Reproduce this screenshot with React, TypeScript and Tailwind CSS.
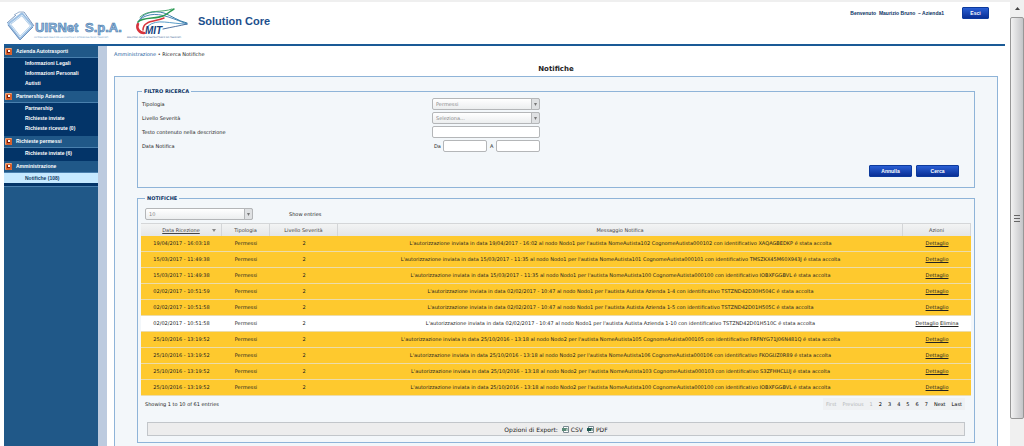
import React from "react";

interface MenuGroup {
  title: string;
  items: string[];
}

interface Notifica {
  data: string;
  messaggio: string;
  letta?: boolean;
}

const menu: MenuGroup[] = [
  {
    title: "Azienda Autotrasporti",
    items: ["Informazioni Legali", "Informazioni Personali", "Autisti"],
  },
  {
    title: "Partnership Aziende",
    items: ["Partnership", "Richieste inviate", "Richieste ricevute (0)"],
  },
  { title: "Richieste permessi", items: ["Richieste inviate (6)"] },
  { title: "Amministrazione", items: ["Notifiche (108)"] },
];

const notifiche: Notifica[] = [
  {
    data: "19/04/2017 - 16:03:18",
    messaggio:
      "L'autorizzazione inviata in data 19/04/2017 - 16:02 al nodo Nodo1 per l'autista NomeAutista102 CognomeAutista000102 con identificativo XAQAGBEDKP é stata accolta",
  },
  {
    data: "15/03/2017 - 11:49:38",
    messaggio:
      "L'autorizzazione inviata in data 15/03/2017 - 11:35 al nodo Nodo1 per l'autista NomeAutista101 CognomeAutista000101 con identificativo TMSZKX45M60X943J é stata accolta",
  },
  {
    data: "15/03/2017 - 11:49:38",
    messaggio:
      "L'autorizzazione inviata in data 15/03/2017 - 11:35 al nodo Nodo1 per l'autista NomeAutista100 CognomeAutista000100 con identificativo IOBXFGGBVL é stata accolta",
  },
  {
    data: "02/02/2017 - 10:51:59",
    messaggio:
      "L'autorizzazione inviata in data 02/02/2017 - 10:47 al nodo Nodo1 per l'autista Autista Azienda 1-4 con identificativo TSTZND42D30H504C é stata accolta",
  },
  {
    data: "02/02/2017 - 10:51:58",
    messaggio:
      "L'autorizzazione inviata in data 02/02/2017 - 10:47 al nodo Nodo1 per l'autista Autista Azienda 1-5 con identificativo TSTZND42D01H505C é stata accolta",
  },
  {
    data: "02/02/2017 - 10:51:58",
    messaggio:
      "L'autorizzazione inviata in data 02/02/2017 - 10:47 al nodo Nodo1 per l'autista Autista Azienda 1-10 con identificativo TSTZND42D01H510C é stata accolta",
    letta: true,
  },
  {
    data: "25/10/2016 - 13:19:52",
    messaggio:
      "L'autorizzazione inviata in data 25/10/2016 - 13:18 al nodo Nodo2 per l'autista NomeAutista105 CognomeAutista000105 con identificativo FRFNYG71J06N481Q é stata accolta",
  },
  {
    data: "25/10/2016 - 13:19:52",
    messaggio:
      "L'autorizzazione inviata in data 25/10/2016 - 13:18 al nodo Nodo2 per l'autista NomeAutista106 CognomeAutista000106 con identificativo FKOGUZ0R89 é stata accolta",
  },
  {
    data: "25/10/2016 - 13:19:52",
    messaggio:
      "L'autorizzazione inviata in data 25/10/2016 - 13:18 al nodo Nodo2 per l'autista NomeAutista103 CognomeAutista000103 con identificativo S3ZFHHCLUJ é stata accolta",
  },
  {
    data: "25/10/2016 - 13:19:52",
    messaggio:
      "L'autorizzazione inviata in data 25/10/2016 - 13:18 al nodo Nodo2 per l'autista NomeAutista100 CognomeAutista000100 con identificativo IOBXFGGBVL é stata accolta",
  },
];

const UirnetLogo: React.FC = () => (
  <svg width="120" height="34" viewBox="0 0 120 34" role="img" aria-label="UIRNet S.p.A.">
    <g fill="none" strokeLinejoin="round">
      <path d="M3 14 16 4 26 16 14 28Z" stroke="#9cc0e4" strokeWidth="3" />
      <path d="M4 14 16 5 25 16 14 27Z" stroke="#dbe9f6" strokeWidth="1" />
      <path d="M1 13 10 5M2 15 14 30M18 2 28 16M27 17 14 30" stroke="#5a7fae" strokeWidth="0.8" />
      <path d="M8 5 13 2H18" stroke="#5a7fae" strokeWidth="0.6" />
    </g>
    <g
      fontFamily="'Liberation Sans', sans-serif"
      fontWeight="bold"
      fontSize="13"
      fill="#93bbe2"
      stroke="#4a78a8"
      strokeWidth="0.6"
    >
      <text x="29" y="22">
        UIRNet
      </text>
      <text x="79" y="22">
        S.p.A.
      </text>
    </g>
    <text x="28" y="28" fontFamily="'DejaVu Sans', sans-serif" fontSize="2" fill="#5f93c4">
      SISTEMA NAZIONALE PER LA LOGISTICA E INTERMODALITÀ DEI TRASPORTI
    </text>
  </svg>
);

const MitLogo: React.FC = () => (
  <svg width="64" height="32" viewBox="0 0 64 32" role="img" aria-label="MIT">
    <g fill="none" strokeLinecap="round">
      <path d="M18 25C8 22 9 12 20 8C31 4 41 8 61 16" stroke="#4a86b8" strokeWidth="1" />
      <path d="M13 13C16 5 28 2 38 5C46 8 52 13 61 15" stroke="#3a7fa8" strokeWidth="1" />
      <path d="M12 14C16 9 30 11 37 8C42 6 44 3 48 1" stroke="#2c9a52" strokeWidth="1.500" />
      <path d="M14 9C22 1 36 5 46 1" stroke="#4aa870" strokeWidth="1" />
      <path d="M12 16C10 20 13 25 18 25" stroke="#d8343c" strokeWidth="2.500" />
      <path d="M17 22C17 12 30 14 38 10" stroke="#d8343c" strokeWidth="1.500" />
      <path d="M22 18C31 10 44 16 61 16" stroke="#5a9cc8" strokeWidth="1" />
      <path d="M37 21C46 19 53 18 61 16" stroke="#24508a" strokeWidth="0.8" />
    </g>
    <text
      x="19"
      y="26"
      fontFamily="'Liberation Sans', sans-serif"
      fontStyle="italic"
      fontWeight="bold"
      fontSize="10"
      fill="#163f7c"
    >
      MIT
    </text>
    <text x="1" y="30" fontFamily="'DejaVu Sans', sans-serif" fontSize="2" fill="#24508a">
      MINISTERO DELLE INFRASTRUTTURE E DEI TRASPORTI
    </text>
  </svg>
);

const MenuIcon: React.FC = () => (
  <svg width="7" height="7" viewBox="0 0 7 7" aria-hidden="true">
    <rect width="7" height="7" rx="1" fill="#f0a67c" />
    <rect x="1" y="1" width="6" height="6" rx="1" fill="#d8602c" />
    <path d="M2 2H5V5H2Z" fill="#7a1c08" />
    <path d="M3 2H5V4H3Z" fill="#fff" />
  </svg>
);

const ExportIcon: React.FC<{ color: string }> = ({ color }) => (
  <svg width="7" height="7" viewBox="0 0 7 7" aria-hidden="true">
    <path d="M1.500 0.500H6.500V6.500H1.500Z" fill="#fff" stroke="#7a8a92" />
    <path d="M0 2H4V5H0Z" fill={color} />
    <path d="M1 5L5 2M5 2V5" stroke={color} />
  </svg>
);

const SelectBox: React.FC<{ id: string; value: string }> = ({ id, value }) => (
  <div className="relative h-3 w-[108px]">
    <select
      id={id}
      className="block h-3 w-full appearance-none rounded-[2px] border border-[#b4b6b8] bg-linear-to-b from-white to-[#eceeef] pl-[3px] text-[5px] leading-none text-[#888]"
    >
      <option>{value}</option>
    </select>
    <span className="pointer-events-none absolute inset-y-0 right-0 flex w-[9px] items-center justify-center rounded-r-[2px] border border-[#b4b6b8] bg-[#dfe1e3]">
      <svg width="3" height="3" viewBox="0 0 3 3" aria-hidden="true">
        <path d="M0 0H3L1.500 3Z" fill="#777" />
      </svg>
    </span>
  </div>
);

const buttonClass =
  "rounded-[1px] border border-[#0c3a9c] bg-linear-to-b from-[#2a5fd4] to-[#0a2f96] font-[Liberation_Sans,sans-serif] text-[5px] font-bold text-white";
const fieldClass = "h-3 rounded-[2px] border border-[#b4b6b8] bg-white px-1 text-[5px]";
const fieldsetClass = "min-w-0 border border-[#8fb4d8] bg-[#f3f7fa]";
const legendClass = "ml-1 px-[2px] text-[5px] leading-[6px] font-bold text-[#0b3364]";

const Header: React.FC = () => (
  <header className="mr-[5px] ml-1 flex h-11 items-start border-b-2 border-[#1a5a96]">
    <div className="pt-2 pl-[2px]">
      <UirnetLogo />
    </div>
    <div className="pt-[6px]">
      <MitLogo />
    </div>
    <h1 className="pt-3 pl-2 font-[Liberation_Sans,sans-serif] text-[11px] leading-[14px] font-bold text-[#1c4f8c]">
      Solution Core
    </h1>
    <div className="ml-auto flex items-center gap-[18px] pt-[5px] pr-4">
      <span className="font-[Liberation_Sans,sans-serif] text-[5px] font-bold whitespace-pre text-[#0b3364]">
        Benvenuto  Maurizio Bruno  – Azienda1
      </span>
      <button className={`${buttonClass} h-3 w-[27px]`}>Esci</button>
    </div>
  </header>
);

const Sidebar: React.FC = () => (
  <aside className="w-[103px] shrink-0 border-r-[9px] border-[#bdcbdf] bg-[#205888] font-[Liberation_Sans,sans-serif] text-[5px] font-bold text-white">
    <nav className="border-b border-[#4a80ae]">
      {menu.map((group) => (
        <div key={group.title} className="bg-[#033468]">
          <div className="flex h-3 items-center gap-1 border-b border-[#4a80ae] bg-[#205888] pl-[1px]">
            <MenuIcon />
            {group.title}
          </div>
          <ul className="pb-[3px]">
            {group.items.map((item) => (
              <li key={item}>
                <a
                  href="#"
                  className={
                    item.startsWith("Notifiche")
                      ? "block bg-[#c6e9ff] pl-[21px] leading-[10px] text-[#12395f]"
                      : "block pl-[21px] leading-[10px]"
                  }
                >
                  {item}
                </a>
              </li>
            ))}
          </ul>
        </div>
      ))}
    </nav>
  </aside>
);

const Filtro: React.FC = () => (
  <fieldset className={`${fieldsetClass} pb-[10px]`}>
    <legend className={legendClass}>FILTRO RICERCA</legend>
    <div className="grid grid-cols-[290px_1fr] items-center gap-y-[2px] pt-1 pl-1">
      <label htmlFor="tipologia">Tipologia</label>
      <SelectBox id="tipologia" value="Permessi" />
      <label htmlFor="severita">Livello Severità</label>
      <SelectBox id="severita" value="Seleziona..." />
      <label htmlFor="testo">Testo contenuto nella descrizione</label>
      <input id="testo" className={`${fieldClass} w-[108px]`} />
      <span>Data Notifica</span>
      <div className="flex items-center gap-[2px] pl-[2px]">
        <label htmlFor="da">Da</label>
        <input id="da" className={`${fieldClass} w-11`} />
        <label htmlFor="a" className="px-px">
          A
        </label>
        <input id="a" className={`${fieldClass} w-11`} />
      </div>
    </div>
    <div className="mt-[13px] flex justify-end gap-1 pr-[15px]">
      <button className={`${buttonClass} h-3 w-[43px]`}>Annulla</button>
      <button className={`${buttonClass} h-3 w-[43px]`}>Cerca</button>
    </div>
  </fieldset>
);

const Tabella: React.FC = () => (
  <table className="w-full table-fixed border-separate border-spacing-0 text-center">
    <thead className="bg-linear-to-b from-[#f4f5f5] to-[#e4e6e8]">
      <tr className="h-[13px] text-[#444] [&>th]:border-t [&>th]:border-r [&>th]:border-[#d4d6d8] [&>th]:p-0 [&>th]:font-normal">
        <th className="w-[81px]">
          <span className="flex items-center justify-center gap-3 pl-4">
            <a href="#" className="underline">
              Data Ricezione
            </a>
            <svg width="4" height="3" viewBox="0 0 4 3" aria-hidden="true">
              <path d="M0 0H4L2 3Z" fill="#888" />
            </svg>
          </span>
        </th>
        <th className="w-12">Tipologia</th>
        <th className="w-[68px]">Livello Severità</th>
        <th>Messaggio Notifica</th>
        <th className="w-[68px]">Azioni</th>
      </tr>
    </thead>
    <tbody className="[&_td]:border-b [&_td]:border-[#ecdcaa] [&_td]:p-0">
      {notifiche.map((n, i) => (
        <tr key={i} className={n.letta ? "h-4 bg-white" : "h-4 bg-[#fec92e]"}>
          <td>{n.data}</td>
          <td>Permessi</td>
          <td>2</td>
          <td>{n.messaggio}</td>
          <td>
            <a href="#" className="underline">
              Dettaglio
            </a>
            {n.letta && (
              <>
                {" "}
                <a href="#" className="underline">
                  Elimina
                </a>
              </>
            )}
          </td>
        </tr>
      ))}
    </tbody>
  </table>
);

const Paginazione: React.FC = () => (
  <div className="flex items-center justify-between pt-[2px] pr-[6px] pl-1">
    <span>Showing 1 to 10 of 61 entries</span>
    <div className="flex h-3 items-center gap-[6px] bg-[#eff1f3] px-[3px]">
      {["First", "Previous", "1", "2", "3", "4", "5", "6", "7", "Next", "Last"].map(
        (p, i) => (
          <button key={p} disabled={i < 3} className="text-black disabled:text-[#b4b6b8]">
            {p}
          </button>
        )
      )}
    </div>
  </div>
);

const Elenco: React.FC = () => (
  <fieldset className={`${fieldsetClass} mt-[7px] px-[3px] pb-[6px]`}>
    <legend className={legendClass}>NOTIFICHE</legend>
    <div className="flex items-center gap-9 pt-[7px] pb-[3px] pl-1">
      <SelectBox id="entries" value="10" />
      <label htmlFor="entries">Show entries</label>
    </div>
    <Tabella />
    <Paginazione />
    <div className="mx-[6px] mt-3 flex h-[14px] items-center justify-center gap-1 border border-[#c2c6ca] bg-[#ededed] text-[6px]">
      <span>Opzioni di Export:</span>
      <a href="#" className="flex items-center gap-[2px]">
        <ExportIcon color="#5c8a78" />
        CSV
      </a>
      <a href="#" className="flex items-center gap-[2px]">
        <ExportIcon color="#1f5a50" />
        PDF
      </a>
    </div>
  </fieldset>
);

const Scrollbar: React.FC = () => (
  <div className="flex w-[14px] shrink-0 flex-col bg-[#f0f0f0]" aria-hidden="true">
    <div className="flex h-[17px] items-center justify-center">
      <svg width="5" height="3" viewBox="0 0 5 3">
        <path d="M0 3H5L2.500 0Z" fill="#444" />
      </svg>
    </div>
    <div className="flex grow flex-col items-center justify-center gap-[2px] rounded-[2px] border border-[#979797] bg-linear-to-r from-[#f2f2f2] to-[#c4c5c8]">
      <span className="h-px w-[6px] bg-[#666]" />
      <span className="h-px w-[6px] bg-[#666]" />
      <span className="h-px w-[6px] bg-[#666]" />
    </div>
    <div className="h-[27px]" />
  </div>
);

const App: React.FC = () => {
  return (
    <div className="flex h-screen overflow-hidden bg-white font-[DejaVu_Sans,sans-serif] text-[5px] leading-[7px] text-[#222]">
      <div className="flex min-w-0 grow flex-col border-t-2 border-[#efefef]">
        <Header />
        <div className="ml-1 flex grow">
          <Sidebar />
          <main className="flex min-w-0 grow flex-col pt-[5px] pr-3 pl-[7px]">
            <div>
              <a href="#" className="text-[#1c5c9c]">
                Amministrazione
              </a>{" "}
              • Ricerca Notifiche
            </div>
            <h2 className="pt-[7px] text-center text-[7px] leading-[9px] font-bold">Notifiche</h2>
            <div className="mt-[2px] grow border border-[#8fb4d8] bg-[#f3f7fa] px-[22px] pt-[11px] pb-4">
              <Filtro />
              <Elenco />
            </div>
          </main>
        </div>
      </div>
      <Scrollbar />
    </div>
  );
};

export default App;
